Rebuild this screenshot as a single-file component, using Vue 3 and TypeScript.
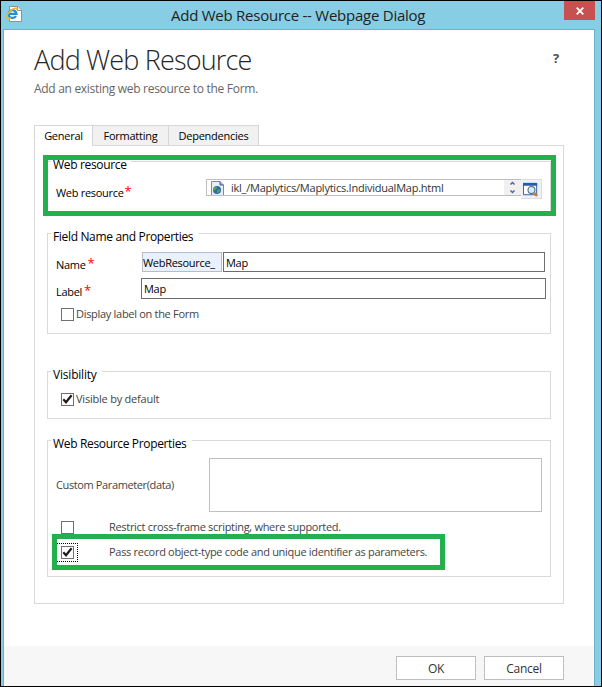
<script setup lang="ts">
import { ref } from 'vue'

const tabs = [
  { id: 'general', label: 'General' },
  { id: 'formatting', label: 'Formatting' },
  { id: 'dependencies', label: 'Dependencies' },
]
const activeTab = ref('general')
const name = ref('Map')
const label = ref('Map')
const data = ref('')
const showLabel = ref(false)
const visible = ref(true)
const restrict = ref(false)
const passRecord = ref(true)
</script>

<template>
  <div class="window">
    <header class="titlebar">
      <svg class="page-icon" width="17" height="17" viewBox="0 0 17 17">
        <path d="M3.500 .5h8.500l3.500 3.500v11.500h-12z" fill="#fff" stroke="#8d9296" />
        <path d="M11.500 .5v4h4" fill="#e8e8e8" stroke="#8d9296" />
        <path d="M9.900 10A3.900 3.900 0 1 1 10.400 7.900H3.500" fill="none" stroke="#238fd3" stroke-width="2.300" />
        <path d="M1.200 12.300C-.6 9.800 5.500 1.600 10.200 2.200C11 2.400 11 3.300 10.600 4M1.200 12.300C2.200 13.200 4 12.300 5 11.600" fill="none" stroke="#f1b72b" stroke-width="1.500" />
      </svg>
      <span class="window-title">Add Web Resource -- Webpage Dialog</span>
      <button class="close" aria-label="Close">
        <svg width="8" height="8" viewBox="0 0 8 8"><path d="M.7.7l6.600 6.600M7.300.7L.7 7.300" stroke="#fff" stroke-width="1.800" /></svg>
      </button>
    </header>

    <main class="content">
      <div class="heading">
        <h1>Add Web Resource</h1>
        <span class="help">?</span>
      </div>
      <p class="subtitle">Add an existing web resource to the Form.</p>

      <nav class="tabs">
        <button
          v-for="tab in tabs"
          :key="tab.id"
          class="tab"
          :class="[tab.id, { active: activeTab === tab.id }]"
          @click="activeTab = tab.id"
        ><span>{{ tab.label }}</span></button>
      </nav>

      <div class="panel">
        <section class="group group-resource">
          <div class="legend l-resource"><span>Web resource</span></div>
          <div class="row resource-row">
            <label class="caption c-resource">Web resource<i>*</i></label>
            <div class="lookup">
              <svg class="file-icon" width="13" height="14" viewBox="0 0 13 14">
                <path d="M.5 14V.5h8.500l3.500 3.500v10" fill="#e9eefa" stroke="#7688b4" />
                <path d="M9 .5v3.500h3.500" fill="#a8b7da" stroke="#435887" />
                <circle cx="6" cy="9" r="4" fill="#2e68ae" />
                <path d="M4 5.700c2-.6 2.500 1 1.500 2s-2 2.300-3.200 1.600C2 7.800 2.700 6.300 4 5.700M7 8.500c1.500-.6 2.500.5 1.800 1.500S7.500 12 6.500 12s-.5-2.700.5-3.500" fill="#4fab49" />
              </svg>
              <span class="lookup-text">ikl_/Maplytics/Maplytics.IndividualMap.html</span>
              <svg class="spinner" width="17" height="15" viewBox="0 0 17 15">
                <path d="M6.500 4.500l2-2 2 2M6.500 10.500l2 2 2-2" fill="none" stroke="#52617f" stroke-width="1.400" />
              </svg>
            </div>
            <button class="browse" aria-label="Look up">
              <svg width="17" height="16" viewBox="0 0 17 16">
                <path d="M.5 1h14v12H.5z" fill="#fbfdff" stroke="#2c5a9e" />
                <path d="M0 .5h15v3H0z" fill="#235bb5" />
                <circle cx="9" cy="8" r="3.700" fill="#d4eaf9" stroke="#51657e" stroke-width="1.100" />
                <path d="M12 11.300l3 3" stroke="#c67a35" stroke-width="2.800" />
              </svg>
            </button>
          </div>
        </section>

        <section class="group group-name">
          <div class="legend l-name"><span>Field Name and Properties</span></div>
          <div class="row name-row">
            <label class="caption c-name">Name<i>*</i></label>
            <span class="prefix">WebResource_</span>
            <input v-model="name" class="field" />
          </div>
          <div class="row label-row">
            <label class="caption c-label">Label<i>*</i></label>
            <input v-model="label" class="field" />
          </div>
          <label class="check">
            <input v-model="showLabel" type="checkbox" />
            <span class="box"></span>
            <span class="check-text">Display label on the Form</span>
          </label>
        </section>

        <section class="group group-visibility">
          <div class="legend l-visibility"><span>Visibility</span></div>
          <label class="check">
            <input v-model="visible" type="checkbox" />
            <span class="box"><svg v-if="visible" viewBox="0 0 11 11"><path d="M1.300 5.300L4 8.300 9.600 1.300" /></svg></span>
            <span class="check-text t-visible">Visible by default</span>
          </label>
        </section>

        <section class="group group-properties">
          <div class="legend l-properties"><span>Web Resource Properties</span></div>
          <div class="row data-row">
            <label class="caption c-data">Custom Parameter(data)</label>
            <textarea v-model="data"></textarea>
          </div>
          <label class="check wide">
            <input v-model="restrict" type="checkbox" />
            <span class="box"></span>
            <span class="check-text">Restrict cross-frame scripting, where supported.</span>
          </label>
          <label class="check wide focused">
            <input v-model="passRecord" type="checkbox" />
            <span class="box"><svg v-if="passRecord" viewBox="0 0 11 11"><path d="M1.300 5.300L4 8.300 9.600 1.300" /></svg></span>
            <span class="check-text">Pass record object-type code and unique identifier as parameters.</span>
          </label>
        </section>
      </div>
    </main>

    <footer class="footer">
      <button class="action ok">OK</button>
      <button class="action cancel">Cancel</button>
    </footer>

    <div class="highlight highlight-resource"></div>
    <div class="highlight highlight-pass"></div>
  </div>
</template>

<style>
body {
  margin: 0;
  overflow: hidden;
}
</style>

<style scoped>
* {
  box-sizing: border-box;
}
.window {
  position: relative;
  display: flex;
  flex-direction: column;
  width: 602px;
  height: 687px;
  padding: 0 6px 0 2px;
  border: 1px solid #000;
  background: #87cee4;
  font-family: "Open Sans", "Noto Sans", sans-serif;
  font-size: 11px;
  letter-spacing: -0.3px;
  color: #000;
}
button,
input,
textarea {
  margin: 0;
  padding: 0;
  border: 0;
  font: inherit;
  letter-spacing: inherit;
  color: inherit;
}
.titlebar {
  display: flex;
  align-items: flex-start;
  height: 28px;
  flex: none;
}
.page-icon {
  margin: 5px 0 0 3px;
}
.window-title {
  width: 393px;
  margin: 4px 0 0 148px;
  font-size: 15px;
  line-height: 20px;
  letter-spacing: -0.25px;
  white-space: nowrap;
  color: #222;
}
.close {
  display: flex;
  align-items: center;
  justify-content: center;
  width: 31px;
  height: 19px;
  background: #c75050;
}
.content {
  height: 617px;
  flex: none;
  padding: 16px 30px 0;
  border: 1px solid #6cb1c5;
  border-bottom: 0;
  background: #fff;
}
.heading {
  display: flex;
  justify-content: space-between;
  height: 36px;
}
h1 {
  margin: -5px 0 0;
  font-size: 27px;
  line-height: 38px;
  font-weight: 300;
  letter-spacing: -0.83px;
  white-space: nowrap;
  color: #262626;
}
.help {
  margin: 3px 5px 0 0;
  font-size: 13px;
  line-height: 18px;
  font-weight: 700;
  color: #505050;
}
.subtitle {
  margin: -1px 0 28px;
  font-size: 12px;
  line-height: 16px;
  color: #666;
}
.tabs {
  display: flex;
  height: 21px;
  position: relative;
}
.tab {
  height: 20px;
  border: 1px solid #d6d6d6;
  border-left-width: 0;
  border-bottom: 0;
  background: #f1f1f1;
  line-height: 19px;
  letter-spacing: -0.25px;
}
.tab.active {
  height: 21px;
  padding-bottom: 2px;
  border-left-width: 1px;
  background: #fff;
}
.general {
  width: 59px;
}
.formatting {
  width: 76px;
}
.dependencies {
  width: 90px;
}
.panel {
  width: 530px;
  height: 459px;
  margin-top: -1px;
  padding: 15px 12px 0;
  border: 1px solid #d9d9d9;
}
.group {
  border: 1px solid #d9d9d9;
  width: 504px;
}
.group-resource {
  height: 53px;
}
.group-name {
  height: 101px;
  margin-top: 19px;
}
.group-visibility {
  height: 48px;
  margin-top: 37px;
}
.group-properties {
  height: 137px;
  margin-top: 21px;
}
.legend {
  height: 14px;
  margin: -4px 0 0 3px;
  padding-left: 2px;
  background: #fff;
  font-size: 12px;
  line-height: 14px;
  letter-spacing: -0.34px;
  white-space: nowrap;
}
.l-resource {
  width: 80px;
}
.l-name {
  width: 148px;
}
.l-visibility {
  width: 51px;
  letter-spacing: -0.2px;
}
.l-properties {
  width: 141px;
}
.row {
  display: flex;
  padding-left: 8px;
}
.caption {
  line-height: 16px;
  white-space: nowrap;
}
.caption i {
  margin-left: 2px;
  font-size: 13px;
  line-height: 10px;
  font-style: normal;
  vertical-align: 1px;
  color: #f00;
}
.resource-row {
  margin-top: 7px;
}
.c-resource {
  width: 150px;
  padding-top: 6px;
}
.c-resource i {
  margin-left: 1px;
}
.lookup {
  display: flex;
  width: 315px;
  height: 17px;
  border: 1px solid #bfbfbf;
  border-right: 0;
  background: #fff;
}
.file-icon {
  margin: 1px 0 0 4px;
}
.lookup-text {
  width: 273px;
  margin-left: 7px;
  line-height: 16px;
  letter-spacing: -0.24px;
  white-space: nowrap;
  color: #333;
}
.spinner {
  background: #f0f0f0;
}
.browse {
  display: flex;
  width: 21px;
  height: 20px;
  padding: 2px;
  border: 1px solid #ddd;
  border-left: 0;
  background: #edf0f6;
}
.name-row {
  height: 20px;
  margin-top: 8px;
}
.c-name {
  width: 86px;
  padding-top: 5px;
}
.prefix {
  width: 80px;
  height: 20px;
  border: 1px solid #b8bcc4;
  background: #e8f1fd;
  line-height: 20px;
  white-space: nowrap;
}
.field {
  height: 20px;
  padding-left: 2px;
  border: 1px solid #6d6d6d;
  background: #fff;
}
.name-row .field {
  width: 322px;
  margin-left: 1px;
}
.label-row {
  height: 21px;
  margin-top: 6px;
}
.c-label {
  width: 85px;
  padding-top: 6px;
}
.label-row .field {
  width: 405px;
  height: 21px;
}
.check {
  display: flex;
  align-items: center;
  height: 13px;
  margin: 9px 0 0 13px;
}
.check input {
  position: absolute;
  opacity: 0;
}
.box {
  position: relative;
  width: 13px;
  height: 13px;
  border: 1px solid #707070;
  background: #fff;
}
.box svg {
  display: block;
  width: 11px;
  height: 11px;
}
.box path {
  fill: none;
  stroke: #1c1c1c;
  stroke-width: 2.2;
}
.check-text {
  margin: 0 0 2px 2px;
  line-height: 14px;
  white-space: nowrap;
  color: #444;
}
.t-visible {
  letter-spacing: -0.22px;
}
.group-visibility .check {
  margin-top: 11px;
}
.data-row {
  margin-top: 7px;
}
.c-data {
  width: 153px;
  padding-top: 19px;
  letter-spacing: -0.38px;
  color: #444;
}
textarea {
  width: 333px;
  height: 54px;
  border: 1px solid #bfbfbf;
  background: #fff;
  resize: none;
}
.wide .check-text {
  margin-left: 35px;
}
.wide.focused {
  margin-top: 12px;
}
.focused .box::after {
  content: "";
  position: absolute;
  inset: -4px -5px -4px -6px;
  border: 1px dotted #000;
}
.footer {
  display: flex;
  gap: 8px;
  height: 40px;
  padding: 10px 0 0 392px;
  border: solid #6cb1c5;
  border-width: 0 1px;
  background: #f7f7f7;
}
.action {
  width: 80px;
  height: 24px;
  border: 1px solid #bfbfbf;
  background: #fff;
  font-size: 12px;
  color: #333;
}
.highlight {
  position: absolute;
  border: 5px solid #22b14c;
  pointer-events: none;
}
.highlight-resource {
  top: 154px;
  left: 42px;
  width: 513px;
  height: 61px;
}
.highlight-pass {
  top: 533px;
  left: 51px;
  width: 393px;
  height: 36px;
}
</style>
